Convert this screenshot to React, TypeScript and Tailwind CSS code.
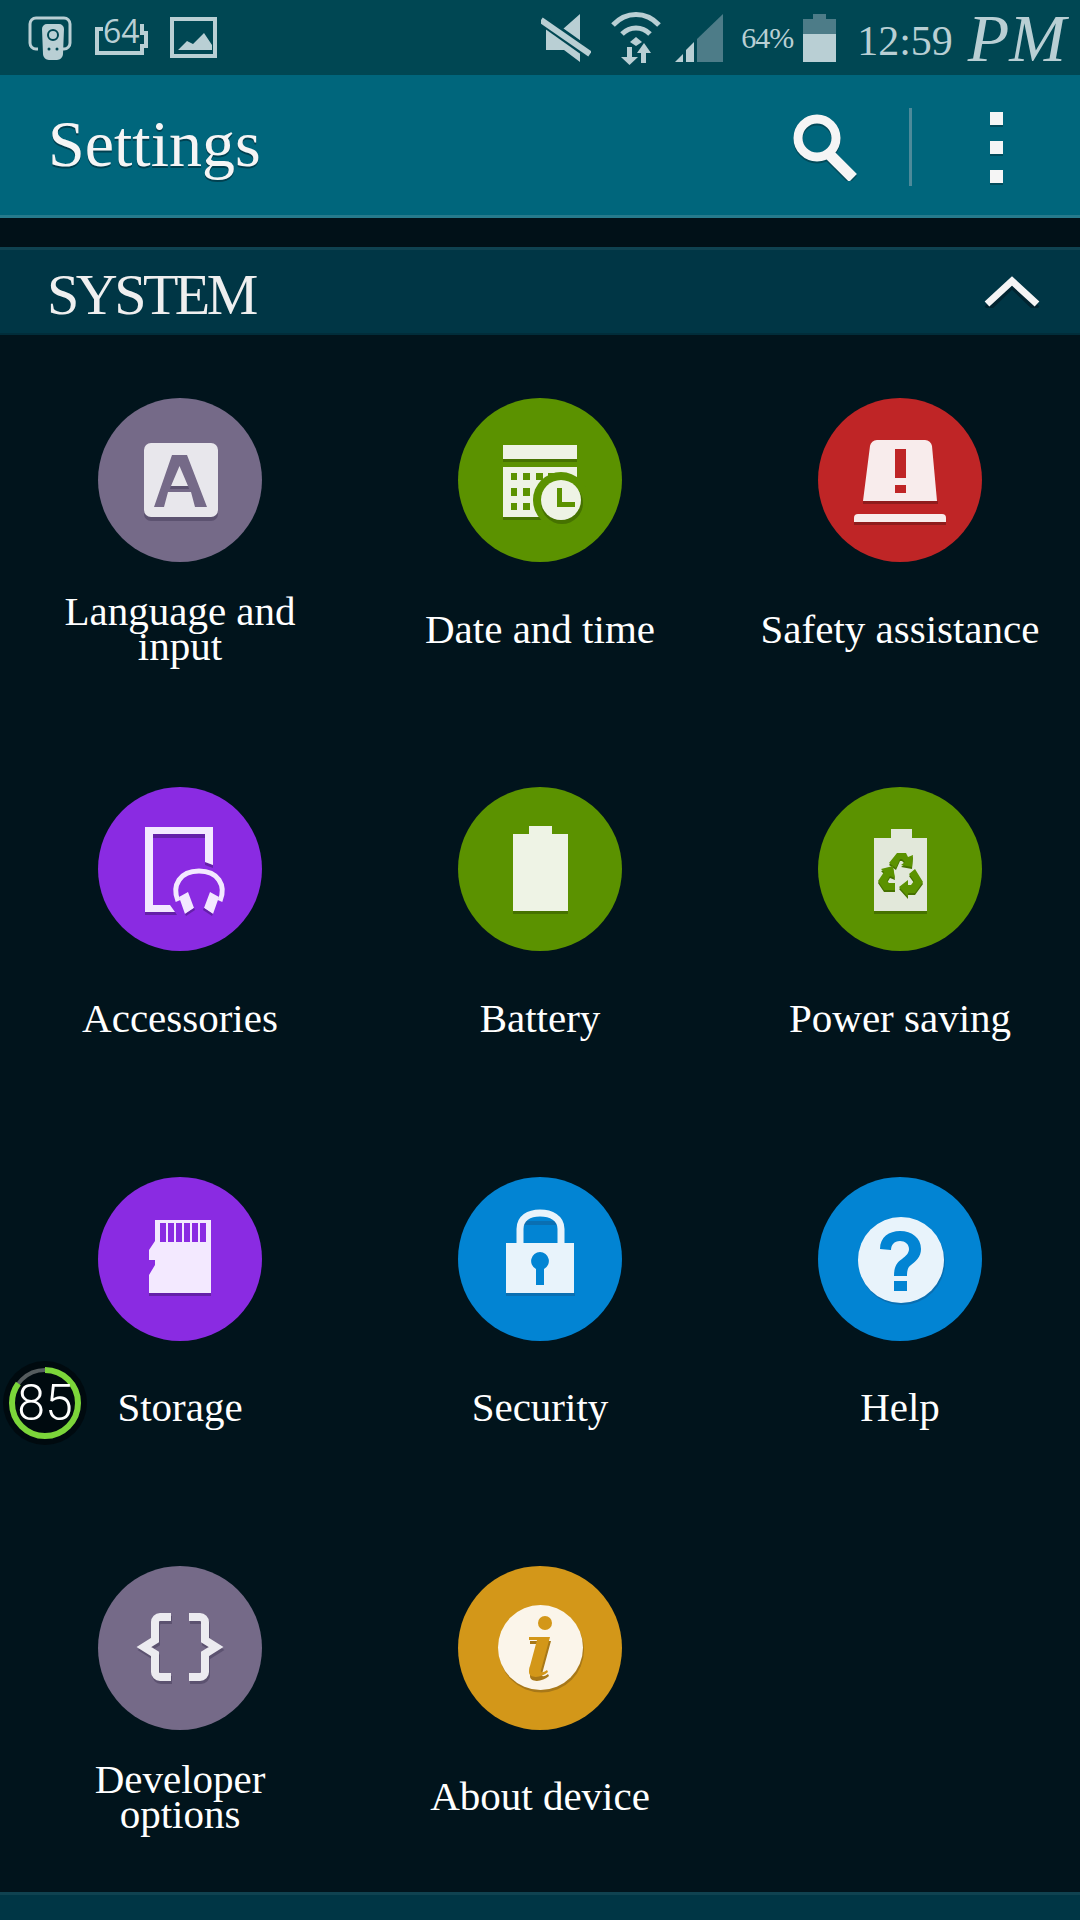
import type { ReactNode } from "react";

const SERIF = "font-['Liberation_Serif',serif]";

type Item = { label: ReactNode; bg: string; icon: ReactNode };

const LanguageIcon = () => (
  <svg width="164" height="164" viewBox="0 0 164 164">
    <rect x="46" y="49" width="74" height="74" rx="7" fill="#5c5270" />
    <rect x="46" y="45" width="74" height="74" rx="7" fill="#e8e7ec" />
    <path fillRule="evenodd" fill="#756a88" d="M74 57h15l20 52H97l-4-15H70l-4 15H56zM81.500 68L73 88h17z" />
    <path d="M73 88h17l1 3H72z" fill="#5c5270" />
  </svg>
);

const DateIcon = () => (
  <svg width="164" height="164" viewBox="0 0 164 164">
    <path d="M45 61h74v3H45zM45 119h40v3H45z" fill="#467200" />
    <path d="M45 47h74v14H45z" fill="#eef3e5" />
    <path
      fillRule="evenodd"
      fill="#eef3e5"
      d="M45 69h74v50H45zM53 75v7h6v-7zM65 75v7h7v-7zM78 75v7h7v-7zM90 75v7h7v-7zM103 75v7h7v-7zM53 90v8h6v-8zM65 90v8h7v-8zM53 105v7h6v-7zM65 105v7h7v-7z"
    />
    <circle cx="103" cy="102" r="28" fill="#5b9200" />
    <circle cx="104" cy="105" r="21" fill="#467200" />
    <circle cx="103" cy="102" r="20" fill="#eef3e5" />
    <path d="M99 90h5v14h13v5H99z" fill="#5b9200" />
  </svg>
);

const SafetyIcon = () => (
  <svg width="164" height="164" viewBox="0 0 164 164">
    <path d="M45 103h75v3H45zM36 124h92v3H36z" fill="#8f1c1c" />
    <path d="M45 103h74l-5-55a7 7 0 0 0-7-6H59a7 7 0 0 0-7 6z" fill="#f8ecec" />
    <path d="M77 51h11v29H77zM77 87h11v8H77z" fill="#bf2526" />
    <path d="M40 116h84a4 4 0 0 1 4 4v4H36v-4a4 4 0 0 1 4-4z" fill="#f8ecec" />
  </svg>
);

const AccessoriesIcon = () => (
  <svg width="164" height="164" viewBox="0 0 164 164">
    <path d="M55 47h52v4H55zM47 125h30l2 3H47zM107 75l8 3v3l-8-3z" fill="#6420a8" />
    <path fill="#f3e9ff" d="M47 40h68v38l-8-3V47H55v71h17l5 7H47z" />
    <path d="M80 114c-3-7-3-15 1-21 4-6 12-9 20-9s16 3 20 9c4 6 4 14 1 21" fill="none" stroke="#f3e9ff" strokeWidth="5" />
    <path d="M81 110l9-5 6 16-9 6zM121 110l-9-5-6 16 9 6z" fill="#f3e9ff" />
    <path d="M87 127l9-6 1 2-9 6zM115 127l-9-6-1 2 9 6z" fill="#6420a8" />
  </svg>
);

const BatteryIcon = () => (
  <svg width="164" height="164" viewBox="0 0 164 164">
    <path d="M55 124h55v3H55z" fill="#467200" />
    <path d="M71 39h23v8h16v77H55V47h16z" fill="#eef3e5" />
  </svg>
);

const RECYCLE =
  "M71 76l8-10h9l2 4 5-2-1 12-11-2 4-3-3-3h-2l-4 9zM63 82l12-3 2 12-5-2-3 5 2 2h6v7H66l-6-9 6-9zM97 82l8 13-8 11h-7v4l-9-10 9-7v5h3l3-4-5-7z";

const PowerSavingIcon = () => (
  <svg width="164" height="164" viewBox="0 0 164 164">
    <path d="M56 124h53v3H56z" fill="#467200" />
    <path d="M73 42h21v9h15v73H56V51h17z" fill="#e2e8da" />
    <path d={RECYCLE} transform="translate(0 2)" fill="#467200" />
    <path d={RECYCLE} fill="#5b9200" />
  </svg>
);

const StorageIcon = () => (
  <svg width="164" height="164" viewBox="0 0 164 164">
    <path d="M51 116h62v3H51z" fill="#6420a8" />
    <path
      fillRule="evenodd"
      fill="#f3e9ff"
      d="M57 43h56v73H51V98l6-10v-5h-6V73l6-9zM62 46v19h6V46zM70 46v19h6V46zM78 46v19h6V46zM86 46v19h6V46zM94 46v19h6V46zM102 46v19h6V46z"
    />
  </svg>
);

const SecurityIcon = () => (
  <svg width="164" height="164" viewBox="0 0 164 164">
    <path d="M48 116h69v3H48zM65 44h33v4H65z" fill="#0a6fb2" />
    <path d="M62 67V52c0-11 9-16 20-16s21 5 21 16v15" fill="none" stroke="#e8f3fb" strokeWidth="7" />
    <path fillRule="evenodd" fill="#e8f3fb" d="M48 66h68v50H48zM82 75a9 9 0 0 0-4 17v16h8V92a9 9 0 0 0-4-17z" />
  </svg>
);

const HelpIcon = () => (
  <svg width="164" height="164" viewBox="0 0 164 164">
    <circle cx="84" cy="85" r="43" fill="#0a6fb2" />
    <circle cx="83" cy="83" r="43" fill="#e8f3fb" />
    <path d="M62 72c0-12 9-18 20-18 12 0 21 7 21 18 0 8-5 12-10 16-3 2-4 5-4 11H76c0-8 2-13 8-17 4-3 7-6 7-10 0-5-4-8-9-8-6 0-9 4-9 9zM76 104h13v10H76z" fill="#0284d3" />
  </svg>
);

const DEV_LEFT = "M73 51H62a5 5 0 0 0-5 5v18l-11 7 11 7v18a5 5 0 0 0 5 5h11";
const DEV_RIGHT = "M91 51h11a5 5 0 0 1 5 5v18l11 7-11 7v18a5 5 0 0 1-5 5H91";

const DeveloperIcon = () => (
  <svg width="164" height="164" viewBox="0 0 164 164" fill="none">
    <g stroke="#5c5270" strokeWidth="8" transform="translate(1 3)">
      <path d={DEV_LEFT} />
      <path d={DEV_RIGHT} />
    </g>
    <g stroke="#ecebf0" strokeWidth="8">
      <path d={DEV_LEFT} />
      <path d={DEV_RIGHT} />
    </g>
  </svg>
);

const AboutIcon = () => (
  <svg width="164" height="164" viewBox="0 0 164 164">
    <circle cx="83.500" cy="84" r="42.500" fill="#a87818" />
    <circle cx="82.500" cy="81.500" r="42.500" fill="#fbf5ea" />
    <circle cx="87" cy="57" r="7" fill="#d39719" />
    <path d="M71 73h21l-9 33c-1 3 2 3 6 0l1 2c-6 6-19 7-19 0 0-2 0-4 1-6l7-26h-8z" transform="translate(1 2)" fill="#a87818" />
    <path d="M71 71h21l-9 33c-1 3 2 3 6 0l1 2c-6 6-19 7-19 0 0-2 0-4 1-6l7-26h-8z" fill="#d39719" />
  </svg>
);

const items: Item[] = [
  { label: <>Language and<br />input</>, bg: "bg-[#756a88]", icon: <LanguageIcon /> },
  { label: "Date and time", bg: "bg-[#5b9200]", icon: <DateIcon /> },
  { label: "Safety assistance", bg: "bg-[#bf2526]", icon: <SafetyIcon /> },
  { label: "Accessories", bg: "bg-[#8a2be2]", icon: <AccessoriesIcon /> },
  { label: "Battery", bg: "bg-[#5b9200]", icon: <BatteryIcon /> },
  { label: "Power saving", bg: "bg-[#5b9200]", icon: <PowerSavingIcon /> },
  { label: "Storage", bg: "bg-[#8a2be2]", icon: <StorageIcon /> },
  { label: "Security", bg: "bg-[#0284d3]", icon: <SecurityIcon /> },
  { label: "Help", bg: "bg-[#0284d3]", icon: <HelpIcon /> },
  { label: <>Developer<br />options</>, bg: "bg-[#756a88]", icon: <DeveloperIcon /> },
  { label: "About device", bg: "bg-[#d39719]", icon: <AboutIcon /> },
];

const StatusBar = () => (
  <div className="h-[75px] bg-[#004753] flex items-center justify-between pl-[28px] pr-[14px] text-[#b9cfd4]">
    <div className="flex items-center gap-[21px]">
      <svg width="46" height="44" viewBox="0 0 46 44" fill="none">
        <path d="M10 33H8a6 6 0 0 1-6-6V8a6 6 0 0 1 6-6h28a6 6 0 0 1 6 6v19a6 6 0 0 1-6 6h-1" stroke="currentColor" strokeWidth="3" />
        <path d="M19 8h12a5 5 0 0 1 5 5l-1 25c0 3-3 6-6 6h-8c-3 0-6-3-6-6l-1-25a5 5 0 0 1 5-5z" fill="currentColor" />
        <circle cx="25" cy="19" r="5" fill="none" stroke="#004753" strokeWidth="2" />
        <circle cx="21" cy="33" r="1.500" fill="#004753" />
        <circle cx="29" cy="33" r="1.500" fill="#004753" />
      </svg>
      <div className="relative w-[54px] h-[36px]">
        <svg width="54" height="36" viewBox="0 0 54 36" fill="none" className="absolute left-0 top-0">
          <path d="M8 9H2v24h45v-7h4V13h-4V4" stroke="currentColor" strokeWidth="4" />
        </svg>
        <span className="absolute left-[8px] top-[-8px] font-['Open_Sans',sans-serif] text-[32px] leading-[38px]">64</span>
      </div>
      <svg width="48" height="42" viewBox="0 0 48 42">
        <path fillRule="evenodd" fill="currentColor" d="M0 0h47v41H0zM4 4v33h39V4z" />
        <path d="M8 33l9-9 6 3 11-11 8 12v5z" fill="currentColor" />
      </svg>
    </div>
    <div className="flex items-center">
      <svg width="50" height="48" viewBox="0 0 50 48" className="mr-[20px]">
        <path d="M39 0v27L22 15zM5 15h6l28 21v12L23 36H5z" fill="currentColor" />
        <path d="M1 6l48 34" stroke="#004753" strokeWidth="11" />
        <path d="M0 6l49 34" stroke="currentColor" strokeWidth="6" />
      </svg>
      <svg width="50" height="54" viewBox="0 0 50 54" fill="none" className="mr-[14px]">
        <path d="M2 14c13-14 33-14 46 0M11 23c8-8 20-8 28 0" stroke="currentColor" strokeWidth="5" />
        <path d="M19 31l6-5 6 5-6 4z" fill="currentColor" />
        <path d="M16 36h5v10h6l-8.500 8L10 46h6zM33 32l7 10h-5v10h-5V42h-4z" fill="currentColor" />
      </svg>
      <svg width="48" height="48" viewBox="0 0 48 48" className="mr-[18px]">
        <path d="M0 48l8-8v8zM11 48V36l8-8v20z" fill="currentColor" />
        <path d="M22 48V25L48 0v48z" fill="#4d7c88" />
      </svg>
      <span className={`${SERIF} text-[30px] tracking-[-1px] leading-none mr-[10px]`}>64%</span>
      <svg width="33" height="48" viewBox="0 0 33 48" className="mr-[21px]">
        <path d="M10 0h13v5h10v15H0V5h10z" fill="#4d7c88" />
        <path d="M0 20h33v28H0z" fill="currentColor" />
      </svg>
      <span className={`${SERIF} text-[42px] leading-none mr-[15px] mt-[6px]`}>12:59</span>
      <span className={`${SERIF} italic text-[68px] leading-none`}>PM</span>
    </div>
  </div>
);

const ActionBar = () => (
  <div className="h-[143px] bg-[#00667c] border-b-[3px] border-b-[#267a8c] flex items-center pl-[48px] pt-[4px]">
    <h1 className={`${SERIF} text-[#f5f5f5] text-[66px] leading-none flex-1 mb-[6px] [text-shadow:0_2px_0_#004050]`}>Settings</h1>
    <svg width="66" height="68" viewBox="0 0 66 68" fill="none" className="mr-[50px]">
      <circle cx="24" cy="25" r="19" stroke="#024a5a" strokeWidth="9" transform="translate(0 2)" />
      <path d="M36 41l24 24" stroke="#024a5a" strokeWidth="11" transform="translate(0 2)" />
      <circle cx="24" cy="25" r="19" stroke="#f5f5f5" strokeWidth="9" />
      <path d="M36 41l24 24" stroke="#f5f5f5" strokeWidth="11" />
    </svg>
    <div className="w-[3px] h-[78px] bg-[#4d8a9a]" />
    <div className="w-[168px] flex flex-col items-center gap-[16px]">
      {[0, 1, 2].map((i) => (
        <div key={i} className="w-[13px] h-[13px] bg-[#f5f5f5] shadow-[0_2px_0_#024a5a]" />
      ))}
    </div>
  </div>
);

const SectionHeader = ({ title }: { title: string }) => (
  <div className="h-[88px] shrink-0 bg-[#003645] border-t-[3px] border-t-[#0f4250] border-b-[2px] border-b-[#012d3a] flex items-center justify-between pl-[47px] pr-[40px]">
    <span className={`${SERIF} text-[#efefef] text-[58px] tracking-[-3.500px] leading-none pt-[6px]`}>{title}</span>
    <svg width="56" height="32" viewBox="0 0 56 32" fill="none">
      <path d="M3 30L28 6l25 24" stroke="#012430" strokeWidth="7" transform="translate(0 3)" />
      <path d="M3 28L28 5l25 23" stroke="#f5f5f5" strokeWidth="7" />
    </svg>
  </div>
);

const Tile = ({ item }: { item: Item }) => (
  <div className="h-[389px] flex flex-col items-center pt-[63px]">
    <div className={`w-[164px] h-[164px] rounded-full ${item.bg}`}>{item.icon}</div>
    <div className={`${SERIF} h-[74px] mt-[30px] flex items-center text-center text-white text-[41px] leading-[35px] whitespace-nowrap`}>
      {item.label}
    </div>
  </div>
);

const Badge = () => (
  <div className="absolute left-[3px] top-[1361px] w-[84px] h-[84px] rounded-full bg-[#000a0f] flex items-center justify-center">
    <svg width="80" height="80" viewBox="0 0 80 80" fill="none" className="absolute left-[2px] top-[2px]">
      <circle cx="40" cy="40" r="33" stroke="#555c5e" strokeWidth="4" />
      <circle cx="40" cy="40" r="33" stroke="#7cd63a" strokeWidth="6" strokeDasharray="176 208" transform="rotate(-90 40 40)" />
    </svg>
    <span className="relative font-['Roboto',sans-serif] font-light text-white text-[50px] leading-none">85</span>
  </div>
);

export default function App() {
  return (
    <div className="relative w-[1080px] h-[1920px] overflow-hidden bg-[#01141c]">
      <StatusBar />
      <ActionBar />
      <div className="h-[29px] bg-[#011118]" />
      <SectionHeader title="SYSTEM" />
      <div className="grid grid-cols-3 h-[1557px]">
        {items.map((item, i) => (
          <Tile key={i} item={item} />
        ))}
      </div>
      <SectionHeader title="APPLICATIONS" />
      <Badge />
    </div>
  );
}
